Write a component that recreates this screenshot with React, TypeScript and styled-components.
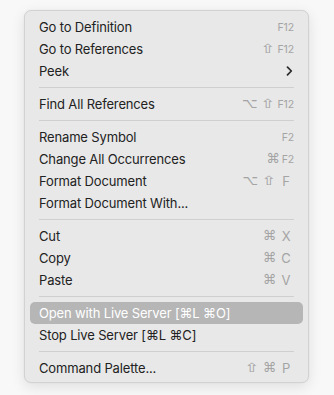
import React from "react";
import styled, { createGlobalStyle } from "styled-components";

const Global = createGlobalStyle`
  html, body { margin: 0; padding: 0; background: #f8f8f8; }
  body { font-family: Inter, "Noto Sans", "DejaVu Sans", sans-serif; -webkit-font-smoothing: antialiased; }
`;

const Page = styled.div`
  width: 334px;
  height: 395px;
  padding: 10px 0 0 24px;
  box-sizing: border-box;
`;

const Menu = styled.div`
  width: 285px;
  height: 373px;
  box-sizing: border-box;
  background: #e8e8e8;
  border: 1px solid #d2d2d2;
  border-radius: 7px;
  box-shadow: 0 4px 14px rgba(0, 0, 0, 0.10), 0 0 2px rgba(0, 0, 0, 0.05);
  padding: 5px 5px 3px;
  display: flex;
  flex-direction: column;
`;

const Row = styled.div<{ $active?: boolean }>`
  height: 22px;
  display: flex;
  align-items: center;
  justify-content: space-between;
  padding: 0 9px;
  border-radius: 5px;
  background: ${(p) => (p.$active ? "#b6b6b6" : "transparent")};
  color: ${(p) => (p.$active ? "#ffffff" : "#222222")};
  font-size: 13px;
  letter-spacing: -0.15px;
`;

const Label = styled.span`
  white-space: nowrap;
`;

const Shortcut = styled.span`
  display: flex;
  align-items: center;
  color: #a4a4a4;
  white-space: nowrap;
`;

const Mod = styled.span<{ $wide?: boolean }>`
  font-family: "DejaVu Sans", sans-serif;
  font-size: 13.5px;
  line-height: 1;
  margin-left: ${(p) => (p.$wide ? "5px" : "3px")};
  margin-right: ${(p) => (p.$wide ? "2px" : "0")};
  display: inline-block;
  transform: ${(p) => (p.$wide ? "scale(1.35, 0.95)" : "none")};
`;

const FKey = styled.span`
  font-size: 10.5px;
  margin-left: 2px;
`;

const Key = styled.span`
  font-size: 13px;
  width: 16px;
  text-align: center;
  margin-left: 2px;
`;

const Separator = styled.div`
  height: 1px;
  background: #cfcfcf;
  margin: 5px 9px;
`;

const Chevron = () => (
  <svg width="7" height="10" viewBox="0 0 7 10" style={{ marginRight: 1 }}>
    <path d="M1.5 1.2 L5.3 5 L1.5 8.8" fill="none" stroke="#2a2a2a" strokeWidth="1.7" strokeLinecap="round" strokeLinejoin="round" />
  </svg>
);

type Item =
  | { sep: true }
  | { label: string; mods?: string[]; fkey?: string; key?: string; sub?: boolean; active?: boolean };

const items: Item[] = [
  { label: "Go to Definition", fkey: "F12" },
  { label: "Go to References", mods: ["⇧"], fkey: "F12" },
  { label: "Peek", sub: true },
  { sep: true },
  { label: "Find All References", mods: ["⌥", "⇧"], fkey: "F12" },
  { sep: true },
  { label: "Rename Symbol", fkey: "F2" },
  { label: "Change All Occurrences", mods: ["⌘"], fkey: "F2" },
  { label: "Format Document", mods: ["⌥", "⇧"], key: "F" },
  { label: "Format Document With..." },
  { sep: true },
  { label: "Cut", mods: ["⌘"], key: "X" },
  { label: "Copy", mods: ["⌘"], key: "C" },
  { label: "Paste", mods: ["⌘"], key: "V" },
  { sep: true },
  { label: "Open with Live Server [⌘L ⌘O]", active: true },
  { label: "Stop Live Server [⌘L ⌘C]" },
  { sep: true },
  { label: "Command Palette...", mods: ["⇧", "⌘"], key: "P" },
];

export default function App() {
  return (
    <>
      <Global />
      <Page>
        <Menu>
          {items.map((it, i) =>
            "sep" in it ? (
              <Separator key={i} />
            ) : (
              <Row key={i} $active={it.active}>
                <Label>{it.label}</Label>
                {it.sub ? (
                  <Chevron />
                ) : (
                  <Shortcut>
                    {it.mods?.map((m, j) => (
                      <Mod key={j} $wide={m === "⇧"}>{m}</Mod>
                    ))}
                    {it.fkey && <FKey>{it.fkey}</FKey>}
                    {it.key && <Key>{it.key}</Key>}
                  </Shortcut>
                )}
              </Row>
            )
          )}
        </Menu>
      </Page>
    </>
  );
}
